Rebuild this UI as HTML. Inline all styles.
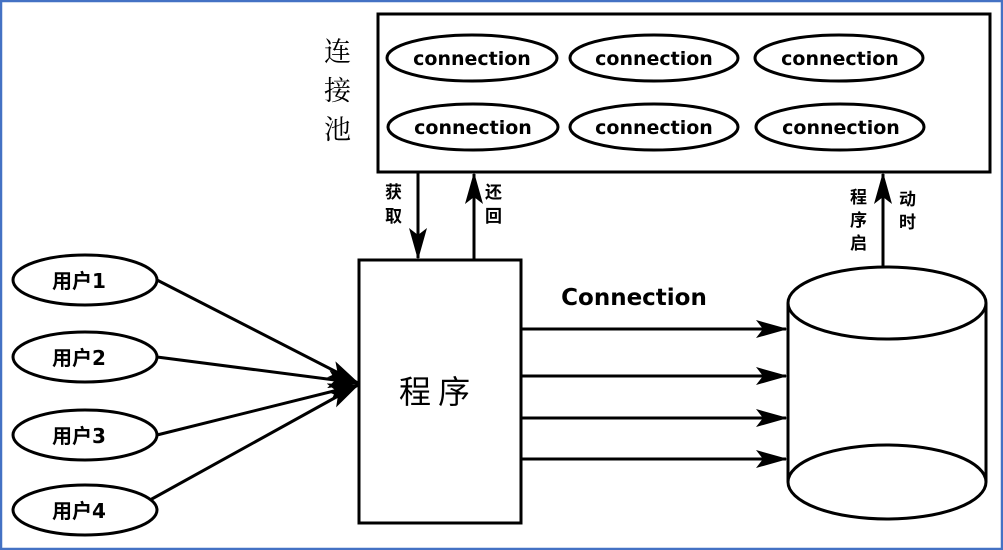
<!DOCTYPE html><html><head><style>body{margin:0;background:#fff}svg{display:block}</style></head><body>
<svg width="1003" height="550" viewBox="0 0 1003 550" xmlns="http://www.w3.org/2000/svg">
<defs>
<marker id="b" markerWidth="32" markerHeight="18" refX="30" refY="9" orient="auto" markerUnits="userSpaceOnUse"><path d="M0,0 L32,9 L0,18 L7,9Z" fill="#000"/></marker></defs>
<rect x="1" y="1" width="1001" height="548" fill="#fff" stroke="#4472c4" stroke-width="2.5"/>
<g fill="none" stroke="#000" stroke-width="3">
<rect x="378" y="14" width="612" height="158"/>
<ellipse cx="472" cy="58" rx="85" ry="23"/><ellipse cx="654" cy="58" rx="84" ry="23"/><ellipse cx="839" cy="58" rx="84" ry="23"/>
<ellipse cx="473" cy="127" rx="85" ry="23"/><ellipse cx="654" cy="127" rx="84" ry="23"/><ellipse cx="840" cy="127" rx="84" ry="23"/>
<rect x="359" y="260" width="162" height="263"/>
<ellipse cx="85" cy="280" rx="72" ry="25"/><ellipse cx="85" cy="357" rx="72" ry="25"/><ellipse cx="85" cy="435" rx="72" ry="25"/><ellipse cx="85" cy="510" rx="72" ry="25"/>
<path d="M788,303 V482 M986,303 V482"/>
<ellipse cx="887" cy="303" rx="99" ry="36"/><ellipse cx="887" cy="482" rx="99" ry="37"/>
</g>
<g stroke="#000" stroke-width="3" fill="none">
<line x1="418" y1="172" x2="418" y2="258" marker-end="url(#b)"/>
<line x1="474" y1="259" x2="474" y2="174" marker-end="url(#b)"/>
<line x1="883" y1="266" x2="883" y2="174" marker-end="url(#b)"/>
<line x1="157" y1="280" x2="358" y2="383" marker-end="url(#b)"/>
<line x1="157" y1="357" x2="358" y2="383" marker-end="url(#b)"/>
<line x1="157" y1="435" x2="358" y2="385" marker-end="url(#b)"/>
<line x1="150" y1="500" x2="358" y2="385" marker-end="url(#b)"/>
<line x1="521" y1="329" x2="786" y2="329" marker-end="url(#b)"/>
<line x1="521" y1="376" x2="786" y2="376" marker-end="url(#b)"/>
<line x1="521" y1="418" x2="786" y2="418" marker-end="url(#b)"/>
<line x1="521" y1="459" x2="786" y2="459" marker-end="url(#b)"/>
</g>
<g font-family="DejaVu Sans, sans-serif" font-weight="bold" font-size="19" text-anchor="middle">
<text x="472" y="65">connection</text><text x="654" y="65">connection</text><text x="840" y="65">connection</text>
<text x="473" y="134">connection</text><text x="654" y="134">connection</text><text x="841" y="134">connection</text>
<text x="634" y="305" font-size="23">Connection</text>
</g>
<g font-family="DejaVu Sans, Noto Sans CJK SC, sans-serif" font-weight="bold" font-size="20">
<text x="52" y="288">用户1</text><text x="52" y="365">用户2</text><text x="52" y="443">用户3</text><text x="52" y="518">用户4</text>
</g>
<g font-family="Noto Sans CJK SC, sans-serif" font-size="17" font-weight="bold">
<text x="385" y="198">获</text><text x="385" y="222">取</text>
<text x="485" y="198">还</text><text x="485" y="222">回</text>
<text x="850" y="203">程</text><text x="850" y="226">序</text><text x="850" y="249">启</text>
<text x="899" y="205">动</text><text x="899" y="228">时</text>
</g>
<g font-family="Noto Serif CJK SC, serif" font-size="27">
<text x="324" y="61">连</text><text x="324" y="100">接</text><text x="324" y="139">池</text>
<text x="399" y="403" font-family="Noto Sans CJK SC, sans-serif" font-size="32">程 序</text>
</g>
</svg></body></html>
